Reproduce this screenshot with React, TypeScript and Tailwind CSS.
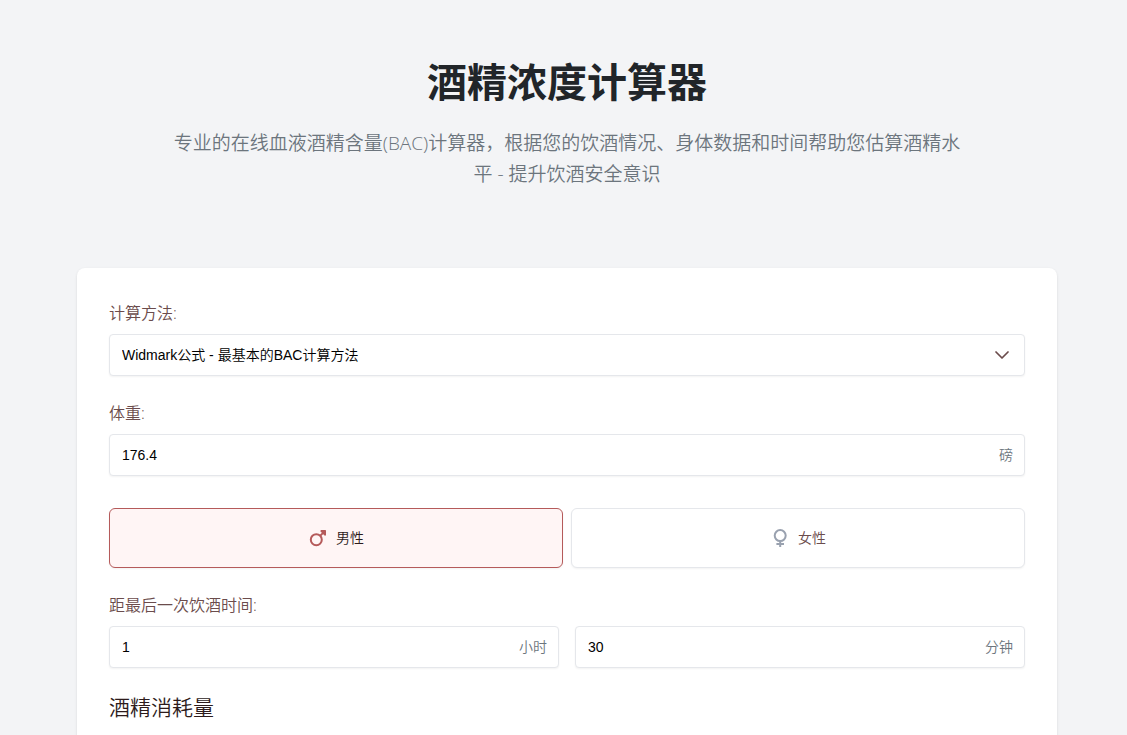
import { useState } from 'react';
import type { FC } from 'react';
import { ChevronDown } from 'lucide-react';
import clsx from 'clsx';

type Gender = 'male' | 'female';

const MaleIcon: FC = () => (
  <svg viewBox="0 0 20 20" className="h-5 w-5" fill="none" stroke="currentColor">
    <circle cx="8.3" cy="11.7" r="5.5" strokeWidth="2" />
    <path d="M12.1 7.9 15.6 4.4" strokeWidth="2" />
    <path d="M12.6 2H17.4Q18 2 18 2.6V7.4L16.4 7.4 12.6 3.6Z" fill="currentColor" stroke="none" />
  </svg>
);

const FemaleIcon: FC = () => (
  <svg viewBox="0 0 20 20" className="h-5 w-5" fill="none" stroke="currentColor">
    <circle cx="10.2" cy="7.6" r="5.5" strokeWidth="2" />
    <path d="M10.2 13V19" strokeWidth="2" />
    <path d="M6.4 16H14" strokeWidth="2" />
  </svg>
);

const methods = [
  { value: 'widmark', label: 'Widmark公式 - 最基本的BAC计算方法' },
];

const genders: { value: Gender; label: string; Icon: FC }[] = [
  { value: 'male', label: '男性', Icon: MaleIcon },
  { value: 'female', label: '女性', Icon: FemaleIcon },
];

const fieldStyle =
  "h-[42px] w-full rounded border border-gray-200 bg-white pl-3 text-sm text-black shadow-xs outline-none font-['Liberation_Sans','Noto_Sans_CJK_SC',sans-serif]";

const labelStyle = 'mb-2 block text-base leading-[26px] text-[#6b4c4c]';

interface UnitInputProps {
  id: string;
  unit: string;
  initial: string;
  ariaLabel?: string;
}

const UnitInput: FC<UnitInputProps> = ({ id, unit, initial, ariaLabel }) => {
  const [value, setValue] = useState(initial);
  return (
    <div className="relative flex-1">
      <input
        id={id}
        type="text"
        inputMode="decimal"
        aria-label={ariaLabel}
        value={value}
        onChange={(e) => setValue(e.target.value)}
        className={clsx(fieldStyle, 'pr-14')}
      />
      <span className="pointer-events-none absolute inset-y-0 right-3 flex items-center text-sm text-[#6c757d]">
        {unit}
      </span>
    </div>
  );
};

const Header = () => (
  <header className="mx-auto max-w-[800px] text-center">
    <h1 className="mb-[22px] text-[40px] leading-12 font-bold text-[#212529]">
      酒精浓度计算器
    </h1>
    <p className="text-[19px] leading-[31px] text-[#6c757d]">
      专业的在线血液酒精含量(BAC)计算器，根据您的饮酒情况、身体数据和时间帮助您估算酒精水平
      - 提升饮酒安全意识
    </p>
  </header>
);

const App = () => {
  const [gender, setGender] = useState<Gender>('male');
  const [method, setMethod] = useState('widmark');

  return (
    <div className="min-h-screen overflow-hidden bg-gray-100 pt-[58px] pl-[7px] font-['Open_Sans','Noto_Sans_CJK_SC',sans-serif] font-[350]">
      <Header />
      <main className="mx-auto mt-[78px] max-w-[980px] rounded-lg bg-white p-8 pb-20 shadow-sm">
        <form className="flex flex-col" onSubmit={(e) => e.preventDefault()}>
          <div className="mb-6">
            <label htmlFor="method" className={labelStyle}>
              计算方法:
            </label>
            <div className="relative">
              <select
                id="method"
                value={method}
                onChange={(e) => setMethod(e.target.value)}
                className={clsx(fieldStyle, 'appearance-none pr-10')}
              >
                {methods.map((m) => (
                  <option key={m.value} value={m.value}>
                    {m.label}
                  </option>
                ))}
              </select>
              <span className="pointer-events-none absolute inset-y-0 right-[11px] flex items-center text-[#6b4c4c]">
                <ChevronDown size={24} strokeWidth={1.75} />
              </span>
            </div>
          </div>

          <div className="mb-8">
            <label htmlFor="weight" className={labelStyle}>
              体重:
            </label>
            <UnitInput id="weight" unit="磅" initial="176.4" />
          </div>

          <div className="mb-6 grid grid-cols-2 gap-2">
            {genders.map(({ value, label, Icon }) => (
              <button
                key={value}
                type="button"
                aria-pressed={gender === value}
                onClick={() => setGender(value)}
                className={clsx(
                  'flex h-[60px] items-center justify-center gap-2 rounded-md border text-sm shadow-xs',
                  gender === value
                    ? 'border-[#b55a5a] bg-[#fff5f5] text-[#2d1b1b]'
                    : 'border-gray-200 bg-white text-[#6b4c4c]'
                )}
              >
                <span
                  className={
                    gender === value ? 'text-[#b55a5a]' : 'text-gray-400'
                  }
                >
                  <Icon />
                </span>
                {label}
              </button>
            ))}
          </div>

          <div className="mb-6">
            <label htmlFor="hours" className={labelStyle}>
              距最后一次饮酒时间:
            </label>
            <div className="flex gap-4">
              <UnitInput id="hours" unit="小时" initial="1" />
              <UnitInput
                id="minutes"
                unit="分钟"
                initial="30"
                ariaLabel="分钟"
              />
            </div>
          </div>

          <h2 className="text-[21px] leading-[31px] text-[#2d1b1b]">
            酒精消耗量
          </h2>
        </form>
      </main>
    </div>
  );
};

export default App;
